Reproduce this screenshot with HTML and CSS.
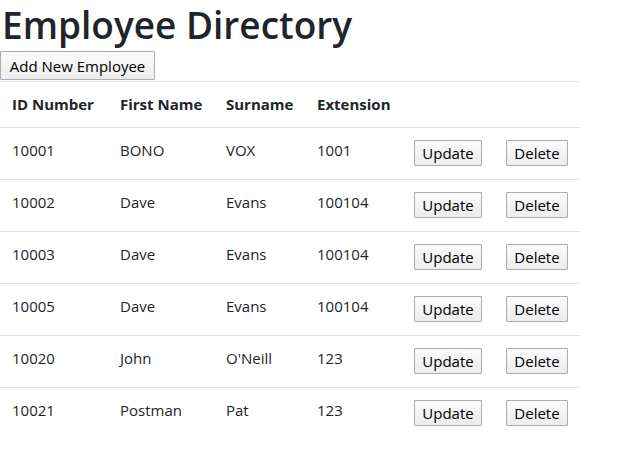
FILE: index.html
```html
<!DOCTYPE html>
<html lang="en">
<head>
<meta charset="utf-8">
<title>Employee Directory</title>
<link rel="stylesheet" href="styles.css">
</head>
<body>
<h1 class="title">Employee Directory</h1>
<button class="btn btn-add">Add New Employee</button>
<table class="table">
  <colgroup>
    <col class="c-id"><col class="c-first"><col class="c-sur"><col class="c-ext"><col class="c-upd"><col class="c-del">
  </colgroup>
  <thead>
    <tr><th>ID Number</th><th>First Name</th><th>Surname</th><th>Extension</th><th></th><th></th></tr>
  </thead>
  <tbody>
    <tr><td>10001</td><td>BONO</td><td>VOX</td><td>1001</td><td><button class="btn btn-upd">Update</button></td><td><button class="btn btn-del">Delete</button></td></tr>
    <tr><td>10002</td><td>Dave</td><td>Evans</td><td>100104</td><td><button class="btn btn-upd">Update</button></td><td><button class="btn btn-del">Delete</button></td></tr>
    <tr><td>10003</td><td>Dave</td><td>Evans</td><td>100104</td><td><button class="btn btn-upd">Update</button></td><td><button class="btn btn-del">Delete</button></td></tr>
    <tr><td>10005</td><td>Dave</td><td>Evans</td><td>100104</td><td><button class="btn btn-upd">Update</button></td><td><button class="btn btn-del">Delete</button></td></tr>
    <tr><td>10020</td><td>John</td><td>O'Neill</td><td>123</td><td><button class="btn btn-upd">Update</button></td><td><button class="btn btn-del">Delete</button></td></tr>
    <tr><td>10021</td><td>Postman</td><td>Pat</td><td>123</td><td><button class="btn btn-upd">Update</button></td><td><button class="btn btn-del">Delete</button></td></tr>
  </tbody>
</table>
</body>
</html>
```
FILE: styles.css
```css
html, body {
  margin: 0;
  padding: 0;
  background: #fff;
}
body {
  font-family: "Open Sans", "Lato", sans-serif;
  font-size: 15px;
  color: #212529;
}
.title {
  margin: 0 0 4px 0;
  padding: 3px 0 0 2px;
  font-size: 37px;
  line-height: 44px;
  font-weight: 600;
  color: #212529;
}
.btn {
  display: block;
  box-sizing: border-box;
  font-family: inherit;
  font-size: 15px;
  color: #000;
  padding: 0;
  text-align: center;
  border: 1px solid #adadad;
  border-radius: 1px;
  background: linear-gradient(#fbfbfb, #ececec);
}
.btn-add {
  width: 155px;
  height: 29px;
  margin-bottom: 1px;
}
.btn-upd {
  width: 68px;
  height: 26px;
}
.btn-del {
  width: 62px;
  height: 26px;
}
.table {
  width: 580px;
  table-layout: fixed;
  border-collapse: collapse;
}
.c-id { width: 108px; }
.c-first { width: 106px; }
.c-sur { width: 91px; }
.c-ext { width: 97px; }
.c-upd { width: 92px; }
.c-del { width: 86px; }
.table th,
.table td {
  text-align: left;
  vertical-align: top;
  padding: 12px;
  border-top: 1px solid #dee2e6;
  line-height: 21px;
  white-space: nowrap;
}
.table th {
  font-weight: 700;
}
.table td {
  height: 27px;
}
```
